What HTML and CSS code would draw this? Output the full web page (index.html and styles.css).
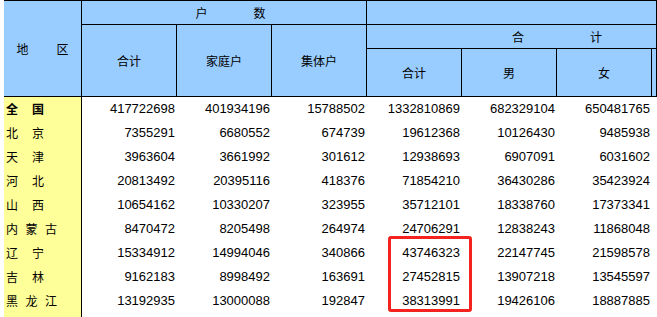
FILE: index.html
```html
<!DOCTYPE html>
<html lang="zh-CN">
<head>
<meta charset="utf-8">
<title>户数与人口</title>
<link rel="stylesheet" href="styles.css">
</head>
<body>
<div class="sheet">
  <div class="head">
    <div class="h h-region"><span>地</span><span>区</span></div>
    <div class="h h-hh"><span>户</span><span>数</span></div>
    <div class="h h-blank"></div>
    <div class="h h-c2"><span>合计</span></div>
    <div class="h h-c3"><span>家庭户</span></div>
    <div class="h h-c4"><span>集体户</span></div>
    <div class="h h-total"><span>合</span><span>计</span></div>
    <div class="h h-c5"><span>合计</span></div>
    <div class="h h-c6"><span>男</span></div>
    <div class="h h-c7"><span>女</span></div>
    <div class="h h-c8"></div>
  </div>
  <div class="body">
    <div class="lab two bold"><span>全</span><span>国</span></div><div class="n">417722698</div><div class="n">401934196</div><div class="n">15788502</div><div class="n">1332810869</div><div class="n">682329104</div><div class="n">650481765</div><div class="n"></div>
    <div class="lab two"><span>北</span><span>京</span></div><div class="n">7355291</div><div class="n">6680552</div><div class="n">674739</div><div class="n">19612368</div><div class="n">10126430</div><div class="n">9485938</div><div class="n"></div>
    <div class="lab two"><span>天</span><span>津</span></div><div class="n">3963604</div><div class="n">3661992</div><div class="n">301612</div><div class="n">12938693</div><div class="n">6907091</div><div class="n">6031602</div><div class="n"></div>
    <div class="lab two"><span>河</span><span>北</span></div><div class="n">20813492</div><div class="n">20395116</div><div class="n">418376</div><div class="n">71854210</div><div class="n">36430286</div><div class="n">35423924</div><div class="n"></div>
    <div class="lab two"><span>山</span><span>西</span></div><div class="n">10654162</div><div class="n">10330207</div><div class="n">323955</div><div class="n">35712101</div><div class="n">18338760</div><div class="n">17373341</div><div class="n"></div>
    <div class="lab three"><span>内</span><span>蒙</span><span>古</span></div><div class="n">8470472</div><div class="n">8205498</div><div class="n">264974</div><div class="n">24706291</div><div class="n">12838243</div><div class="n">11868048</div><div class="n"></div>
    <div class="lab two"><span>辽</span><span>宁</span></div><div class="n">15334912</div><div class="n">14994046</div><div class="n">340866</div><div class="n">43746323</div><div class="n">22147745</div><div class="n">21598578</div><div class="n"></div>
    <div class="lab two"><span>吉</span><span>林</span></div><div class="n">9162183</div><div class="n">8998492</div><div class="n">163691</div><div class="n">27452815</div><div class="n">13907218</div><div class="n">13545597</div><div class="n"></div>
    <div class="lab three"><span>黑</span><span>龙</span><span>江</span></div><div class="n">13192935</div><div class="n">13000088</div><div class="n">192847</div><div class="n">38313991</div><div class="n">19426106</div><div class="n">18887885</div><div class="n"></div>
    <div class="lab filler"></div><div class="n"></div><div class="n"></div><div class="n"></div><div class="n"></div><div class="n"></div><div class="n"></div><div class="n"></div>
  </div>
  <div class="mark"></div>
</div>
</body>
</html>
```
FILE: styles.css
```css
html, body {
  margin: 0;
  padding: 0;
  overflow: hidden;
  background: #fff;
}
body {
  width: 657px;
  height: 317px;
}
.sheet {
  position: relative;
  margin-left: 4px;
  width: 653px;
  height: 317px;
  overflow: hidden;
  font-family: "Noto Sans CJK SC", "Liberation Sans", sans-serif;
  font-size: 12px;
  color: #000;
}
.head {
  display: grid;
  grid-template-columns: 77px repeat(6, 94px) 4px;
  grid-template-rows: 23px 23px 47px;
  gap: 1px;
  padding: 1px 0;
  background: #000;
}
.h {
  background: #99ccff;
  display: flex;
  align-items: center;
  justify-content: center;
  line-height: 12px;
}
.h-region { grid-column: 1; grid-row: 1 / 4; gap: 28px; }
.h-hh { grid-column: 2 / 5; grid-row: 1; gap: 46px; padding-left: 13px; }
.h-blank { grid-column: 5 / 9; grid-row: 1; }
.h-c2 { grid-column: 2; grid-row: 2 / 4; }
.h-c3 { grid-column: 3; grid-row: 2 / 4; }
.h-c4 { grid-column: 4; grid-row: 2 / 4; }
.h-total { grid-column: 5 / 9; grid-row: 2; justify-content: flex-start; padding-left: 145px; gap: 66px; }
.h-c5 { grid-column: 5; grid-row: 3; }
.h-c6 { grid-column: 6; grid-row: 3; }
.h-c7 { grid-column: 7; grid-row: 3; }
.h-c8 { grid-column: 8; grid-row: 3; }

.body {
  display: grid;
  grid-template-columns: 78px repeat(6, 95px) 5px;
  grid-template-rows: repeat(9, 24px) 4px;
}
.lab {
  background: #ffff99;
  border-right: 1px solid #000;
  display: flex;
  align-items: center;
  padding-left: 2px;
  line-height: 12px;
}
.lab.two { gap: 14px; }
.lab.three { gap: 7.5px; }
.lab.bold { font-weight: bold; }
.n {
  font-family: "Liberation Sans", Arial, sans-serif;
  font-size: 13px;
  text-align: right;
  padding-right: 2px;
  line-height: 24px;
  color: #000;
  overflow: hidden;
}
.mark {
  position: absolute;
  left: 384px;
  top: 236px;
  width: 84px;
  height: 76px;
  box-sizing: border-box;
  border: 3px solid #f4231f;
  border-radius: 3px;
}
```
